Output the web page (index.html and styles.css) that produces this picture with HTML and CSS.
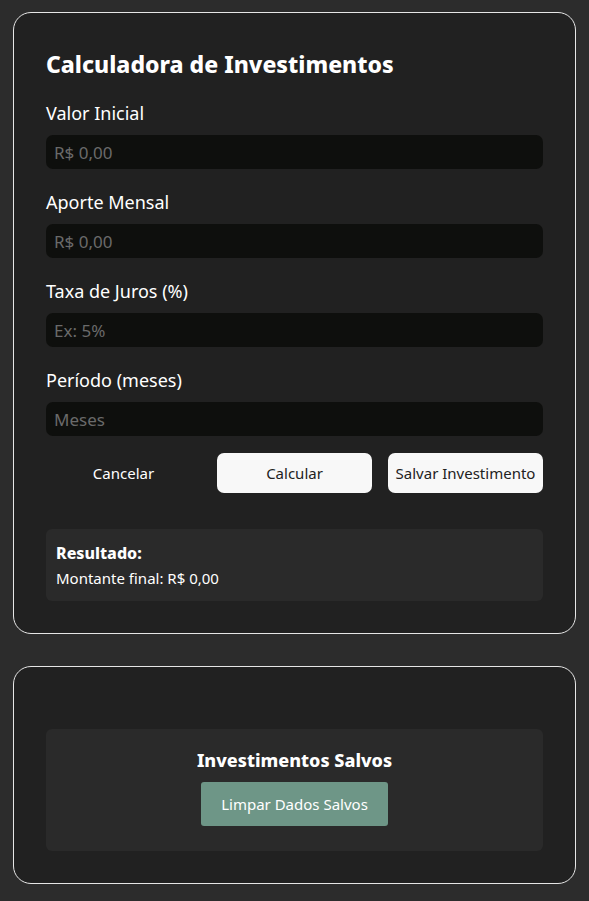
FILE: index.html
```html
<!DOCTYPE html>
<html lang="pt-BR">
<head>
<meta charset="utf-8">
<title>Calculadora de Investimentos</title>
<link rel="stylesheet" href="styles.css">
</head>
<body>
<main class="page">
  <section class="card calc">
    <h1 class="title">Calculadora de Investimentos</h1>
    <div class="field">
      <label class="label">Valor Inicial</label>
      <input class="input" type="text" placeholder="R$ 0,00">
    </div>
    <div class="field">
      <label class="label">Aporte Mensal</label>
      <input class="input" type="text" placeholder="R$ 0,00">
    </div>
    <div class="field">
      <label class="label">Taxa de Juros (%)</label>
      <input class="input" type="text" placeholder="Ex: 5%">
    </div>
    <div class="field">
      <label class="label">Período (meses)</label>
      <input class="input" type="text" placeholder="Meses">
    </div>
    <div class="actions">
      <button class="btn btn-ghost">Cancelar</button>
      <button class="btn btn-light">Calcular</button>
      <button class="btn btn-light">Salvar Investimento</button>
    </div>
    <div class="result">
      <h3 class="result-title">Resultado:</h3>
      <p class="result-text">Montante final: R$ 0,00</p>
    </div>
  </section>
  <section class="card saved">
    <div class="saved-box">
      <h3 class="saved-title">Investimentos Salvos</h3>
      <button class="btn btn-green">Limpar Dados Salvos</button>
    </div>
  </section>
</main>
</body>
</html>
```

FILE: styles.css
```css
* { box-sizing: border-box; }
html, body { margin: 0; padding: 0; }
body {
  background: #2c2c2c;
  font-family: "Noto Sans", "Open Sans", sans-serif;
  color: #ffffff;
}
.page {
  display: flex;
  flex-direction: column;
  gap: 32px;
  padding: 12px 13px 17px 13px;
}
.card {
  background: #212121;
  border: 1px solid #e6e6e6;
  border-radius: 18px;
  padding: 32px 32px 32px 32px;
}
.calc { padding-top: 35px; }
.title {
  margin: 0 0 21px 0;
  font-size: 23px;
  font-weight: 800;
  line-height: 32px;
}
.field {
  display: flex;
  flex-direction: column;
  gap: 9px;
  margin-bottom: 21px;
}
.label {
  font-size: 18px;
  line-height: 25px;
}
.input {
  height: 34px;
  border: none;
  border-radius: 7px;
  background: #0e0f0d;
  color: #ffffff;
  font-family: inherit;
  font-size: 17px;
  padding: 0 8px;
  outline: none;
}
.input::placeholder { color: #6a6a6a; }
.actions {
  display: grid;
  grid-template-columns: 1fr 1fr 1fr;
  gap: 16px;
  margin-top: -4px;
}
.btn {
  height: 40px;
  border: none;
  border-radius: 7px;
  font-family: inherit;
  font-size: 15px;
  padding: 0;
  cursor: pointer;
}
.btn-ghost { background: transparent; color: #ffffff; }
.btn-light { background: #f8f8f8; color: #222222; }
.result {
  margin-top: 36px;
  background: #2a2a2a;
  border-radius: 6px;
  padding: 13px 10px 13px 10px;
}
.result-title {
  margin: 0 0 4px 0;
  font-size: 16px;
  font-weight: 800;
  line-height: 22px;
}
.result-text {
  margin: 0;
  font-size: 15px;
  line-height: 20px;
}
.saved { padding-top: 62px; }
.saved-box {
  background: #2a2a2a;
  border-radius: 6px;
  padding: 19px 10px 25px 10px;
  display: flex;
  flex-direction: column;
  align-items: center;
  gap: 10px;
}
.saved-title {
  margin: 0;
  font-size: 18px;
  font-weight: 800;
  line-height: 24px;
}
.btn-green {
  height: 44px;
  width: 187px;
  border-radius: 3px;
  background: #6e9687;
  color: #ffffff;
}
```
